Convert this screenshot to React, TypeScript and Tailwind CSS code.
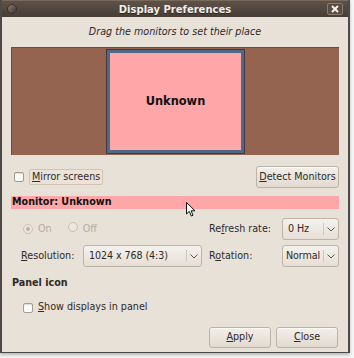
import React from 'react';

const font = { fontFamily: '"DejaVu Sans", Verdana, sans-serif' };

function Check({ className = '' }: { className?: string }) {
  return (
    <span
      className={`inline-block w-[10px] h-[10px] rounded-[2px] border border-[#a49c92] bg-[#fbfaf8] shadow-[inset_0_1px_1px_rgba(0,0,0,0.12)] ${className}`}
    />
  );
}

function Radio({ checked }: { checked?: boolean }) {
  return (
    <span className="inline-flex items-center justify-center w-[10px] h-[10px] rounded-full border border-[#c9c1b7] bg-[#ece6de]">
      {checked && <span className="w-[4px] h-[4px] rounded-full bg-[#b8b0a6]" />}
    </span>
  );
}

function Combo({ value, width, pad = 'pl-[5px]' }: { value: string; width: string; pad?: string }) {
  return (
    <div
      className={`flex items-stretch h-[22px] ${width} rounded-[3px] border border-[#bdb4a9] bg-gradient-to-b from-[#f4f1ed] to-[#e6dfd6] text-[9.6px] text-[#2e2a26]`}
    >
      <span className={`flex-1 flex items-center ${pad} whitespace-nowrap tracking-[-0.1px]`}>{value}</span>
      <span className="w-px my-[4px] bg-[#cfc7bd]" />
      <span className="w-[14px] flex items-center justify-center">
        <svg width="8" height="5" viewBox="0 0 8 5">
          <path d="M0.5 0.5 L4 4 L7.5 0.5" fill="none" stroke="#5c5650" strokeWidth="1" />
        </svg>
      </span>
    </div>
  );
}

function Button({ children, width, height = 'h-[21px]' }: { children: React.ReactNode; width: string; height?: string }) {
  return (
    <button
      className={`flex items-center justify-center whitespace-nowrap ${width} ${height} rounded-[3px] border border-[#bcb3a8] bg-gradient-to-b from-[#f3efea] to-[#e2dad0] text-[9.6px] text-[#2e2a26] shadow-[inset_0_1px_0_#fbf9f6]`}
    >
      {children}
    </button>
  );
}

export default function App() {
  return (
    <div className="w-[354px] h-[358px] bg-[#f6f6f6] overflow-hidden" style={font}>
      <div className="relative w-[350px] h-[353px] flex flex-col border-l-2 border-r-2 border-b border-[#4d4945] bg-[#e8e1d8] shadow-[0_2px_3px_rgba(0,0,0,0.25)]">
        {/* title bar */}
        <div className="h-[17px] flex items-center px-[5px] bg-gradient-to-b from-[#5e5148] to-[#473d36] border-t border-[#7a6a5e]">
          <span className="w-[10px] h-[10px] rounded-full bg-gradient-to-br from-[#8a7d73] to-[#3d3530] border border-[#3a322c]" />
          <span className="flex-1 text-center text-[10px] font-bold text-[#f2efeb] pl-[6px] [text-shadow:0_1px_0_#2a2420]">
            Display Preferences
          </span>
          <span className="flex items-center justify-center w-[16px] h-[12px] rounded-[2px] border border-[#8a7b70] bg-[#5a4d44]">
            <svg width="8" height="8" viewBox="0 0 8 8">
              <path d="M1 1 L7 7 M7 1 L1 7" stroke="#f5f2ee" strokeWidth="2" />
            </svg>
          </span>
        </div>

        <div className="flex-1 flex flex-col px-[9px]">
          <div className="h-[30px] pt-[1px] flex items-center justify-center italic text-[9.6px] text-[#2e2a26]">
            Drag the monitors to set their place
          </div>

          {/* monitor canvas */}
          <div className="h-[108px] flex justify-center items-end bg-[#946450] border-t border-l border-[#6e4a3b] pb-[2px]">
            <div className="w-[137px] h-[103px] flex items-center justify-center bg-[#ffa6a8] border-[3px] border-[#4f6886] shadow-[0_0_0_1px_#3e3a44]">
              <span className="text-[11.4px] font-bold text-[#111]">Unknown</span>
            </div>
          </div>

          {/* mirror / detect */}
          <div className="mt-[11px] flex items-center justify-between">
            <div className="flex items-center">
              <Check className="ml-[3px]" />
              <span className="ml-[5px] h-[16px] px-[2px] flex items-center rounded-[2px] border border-[#d4c2b2] bg-[#ebe3da] text-[9.6px] text-[#2e2a26]">
                <span className="underline">M</span>irror screens
              </span>
            </div>
            <Button width="w-[83px]" height="h-[22px]">
              <span className="underline">D</span>etect Monitors
            </Button>
          </div>

          {/* monitor header */}
          <div className="mt-[8px] h-[13px] flex items-center bg-[#ffa6a8] pl-[1px] text-[9.6px] font-bold text-[#111]">
            Monitor: Unknown
          </div>

          {/* settings grid */}
          <div className="mt-[9px] flex">
            <div className="w-[199px] flex flex-col">
              <div className="h-[22px] flex items-center pl-[12px] text-[9.6px] text-[#b4aca2]">
                <Radio checked />
                <span className="ml-[5px]">On</span>
                <span className="ml-[16px]"><Radio /></span>
                <span className="ml-[5px]">Off</span>
              </div>
              <div className="mt-[5px] flex items-center">
                <span className="w-[72px] pl-[10px] text-[9.6px] text-[#2e2a26]">
                  <span className="underline">R</span>esolution:
                </span>
                <Combo value="1024 x 768 (4:3)" width="w-[119px]" />
              </div>
            </div>
            <div className="flex-1 flex flex-col">
              <div className="h-[22px] flex items-center">
                <span className="w-[73px] text-[9.6px] text-[#2e2a26] whitespace-nowrap">
                  Re<span className="underline">f</span>resh rate:
                </span>
                <Combo value="0 Hz" width="w-[57px]" />
              </div>
              <div className="mt-[5px] flex items-center">
                <span className="w-[73px] text-[9.6px] text-[#2e2a26]">
                  R<span className="underline">o</span>tation:
                </span>
                <Combo value="Normal" width="w-[57px]" pad="pl-[3px]" />
              </div>
            </div>
          </div>

          {/* panel icon */}
          <div className="mt-[9px] text-[9.6px] font-bold text-[#2e2a26] pl-[1px]">Panel icon</div>
          <div className="mt-[10px] flex items-center pl-[12px]">
            <Check />
            <span className="ml-[5px] text-[9.6px] text-[#2e2a26]">
              <span className="underline">S</span>how displays in panel
            </span>
          </div>

          <div className="mt-[12px] flex justify-end gap-[5px] pr-[1px]">
            <Button width="w-[62px]">
              <span className="underline">A</span>pply
            </Button>
            <Button width="w-[62px]">
              <span className="underline">C</span>lose
            </Button>
          </div>
        </div>

        {/* mouse cursor */}
        <svg className="absolute left-[184px] top-[202px]" width="11" height="16" viewBox="0 0 11 16">
          <path d="M0.5 0.5 L0.5 12 L3.3 9.4 L5.3 14 L7 13.3 L5.1 8.8 L9 8.8 Z" fill="#fff" stroke="#111" strokeWidth="1" />
        </svg>
      </div>
    </div>
  );
}
